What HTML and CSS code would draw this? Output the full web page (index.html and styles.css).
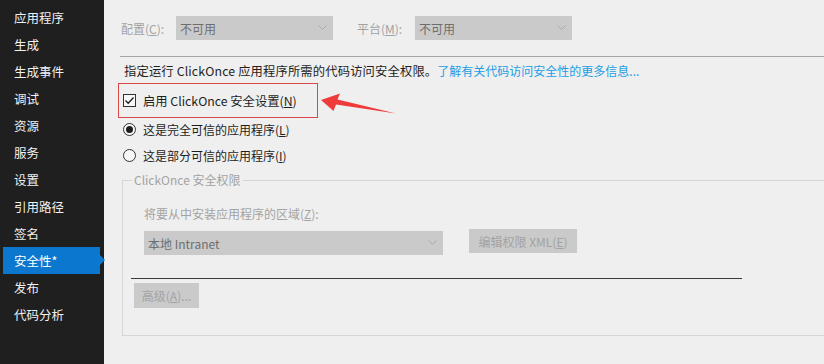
FILE: index.html
```html
<!DOCTYPE html>
<html lang="zh-CN">
<head>
<meta charset="utf-8">
<link rel="stylesheet" href="styles.css">
</head>
<body>
<div class="app">
  <nav class="sidebar">
    <div class="nav-item">应用程序</div>
    <div class="nav-item">生成</div>
    <div class="nav-item">生成事件</div>
    <div class="nav-item">调试</div>
    <div class="nav-item">资源</div>
    <div class="nav-item">服务</div>
    <div class="nav-item">设置</div>
    <div class="nav-item">引用路径</div>
    <div class="nav-item">签名</div>
    <div class="nav-item active">安全性*</div>
    <div class="nav-item">发布</div>
    <div class="nav-item">代码分析</div>
  </nav>
  <main class="main">
    <div class="toolbar">
      <span class="tb-label">配置(<u>C</u>):</span>
      <div class="combo combo-top"><span>不可用</span><svg class="chev" width="9" height="6" viewBox="0 0 9 6"><path d="M0.5 0.5 L4.5 4.5 L8.5 0.5" fill="none" stroke="#a9a9a9" stroke-width="1"/></svg></div>
      <span class="tb-label tb-label2">平台(<u>M</u>):</span>
      <div class="combo combo-top"><span>不可用</span><svg class="chev" width="9" height="6" viewBox="0 0 9 6"><path d="M0.5 0.5 L4.5 4.5 L8.5 0.5" fill="none" stroke="#a9a9a9" stroke-width="1"/></svg></div>
    </div>
    <div class="sep"></div>
    <p class="desc"><span class="desc-main">指定运行 ClickOnce 应用程序所需的代码访问安全权限。</span><a class="link">了解有关代码访问安全性的更多信息...</a></p>
    <div class="redbox">
      <span class="checkbox"><svg width="11" height="11" viewBox="0 0 11 11"><path d="M1.5 5.5 L4.2 8.2 L9.5 2.5" fill="none" stroke="#1e1e1e" stroke-width="1.3"/></svg></span>
      <span class="cb-label">启用 ClickOnce 安全设置(<u>N</u>)</span>
    </div>
    <div class="radio-row first"><span class="radio checked"></span><span>这是完全可信的应用程序(<u>L</u>)</span></div>
    <div class="radio-row"><span class="radio"></span><span>这是部分可信的应用程序(<u>I</u>)</span></div>
    <fieldset class="group">
      <legend>ClickOnce 安全权限</legend>
      <div class="zone-label">将要从中安装应用程序的区域(<u>Z</u>):</div>
      <div class="zone-row">
        <div class="combo combo-zone"><span>本地 Intranet</span><svg class="chev" width="9" height="6" viewBox="0 0 9 6"><path d="M0.5 0.5 L4.5 4.5 L8.5 0.5" fill="none" stroke="#a9a9a9" stroke-width="1"/></svg></div>
        <div class="btn btn-xml">编辑权限 XML(<u>E</u>)</div>
      </div>
      <div class="dark-line"></div>
      <div class="btn btn-adv">高级(<u>A</u>)...</div>
    </fieldset>
    <svg class="annot" width="90" height="30" viewBox="316 90 90 30">
      <polygon points="321,100 340,93.5 337.5,99.5 396,113.5 336,104.5 333.5,111" fill="#f03b3b"/>
    </svg>
  </main>
</div>
</body>
</html>
```
FILE: styles.css
```css
* { box-sizing: border-box; }
html, body { margin: 0; padding: 0; }
body {
  width: 824px;
  height: 364px;
  overflow: hidden;
  background: #efefef;
  font-family: "Noto Sans CJK SC", "Noto Sans", sans-serif;
  font-size: 12px;
  color: #1e1e1e;
}
u { text-decoration: underline; text-underline-offset: 1px; }
.app { display: flex; height: 364px; }
.sidebar {
  width: 104px;
  flex: none;
  background: #1f1f1f;
  padding-top: 4px;
  display: flex;
  flex-direction: column;
}
.nav-item {
  height: 27px;
  line-height: 27px;
  padding-left: 14px;
  color: #f1f1f1;
  font-size: 12.5px;
  position: relative;
}
.nav-item.active {
  background: #0b77cf;
  margin-left: 3px;
  padding-left: 11px;
  width: 97px;
  color: #ffffff;
}
.nav-item.active::after {
  content: "";
  position: absolute;
  right: -5px;
  top: 8px;
  border-top: 5.5px solid transparent;
  border-bottom: 5.5px solid transparent;
  border-left: 5px solid #0b77cf;
}
.main {
  flex: 1;
  position: relative;
  overflow: hidden;
  display: flex;
  flex-direction: column;
  align-items: flex-start;
}
.toolbar {
  display: flex;
  align-items: center;
  height: 24px;
  margin-top: 16px;
  padding-left: 17px;
}
.tb-label { color: #a3a3a3; width: 55px; }
.tb-label2 { margin-left: 24px; width: 58px; }
.combo {
  height: 24px;
  background: #cacaca;
  color: #6e6e6e;
  display: flex;
  align-items: center;
  justify-content: space-between;
  padding: 0 6px 0 4px;
}
.combo-top { width: 157px; }
.chev { flex: none; }
.sep {
  align-self: stretch;
  margin-top: 16px;
  margin-left: 16px;
  height: 1px;
  background: #a5a5a5;
}
.desc {
  margin: 5px 0 0 20px;
  line-height: 18px;
  white-space: nowrap;
}
.desc-main { font-size: 12.3px; letter-spacing: 0.15px; }
.link { color: #1a9ee6; }
.redbox {
  margin: 3px 0 0 14px;
  width: 200px;
  height: 35px;
  border: 1px solid #d9474b;
  display: flex;
  align-items: center;
  padding-left: 4px;
  gap: 7px;
}
.cb-label { font-size: 12.3px; }
.checkbox {
  width: 13px;
  height: 13px;
  border: 1px solid #333;
  background: #f7f7f7;
  display: flex;
  align-items: center;
  justify-content: center;
}
.radio-row {
  display: flex;
  align-items: center;
  gap: 7px;
  height: 22px;
  margin-left: 19px;
  margin-top: 4px;
}
.radio-row.first { margin-top: 0; }
.radio {
  width: 13px;
  height: 13px;
  border: 1px solid #333;
  border-radius: 50%;
  background: #f7f7f7;
  display: flex;
  align-items: center;
  justify-content: center;
}
.radio.checked::after {
  content: "";
  width: 7px;
  height: 7px;
  border-radius: 50%;
  background: #1e1e1e;
}
.group {
  margin: 6px 0 0 18px;
  width: 760px;
  border: 1px solid #d6d6d6;
  padding: 0 0 27px 21px;
  min-width: 0;
}
.group legend {
  color: #a3a3a3;
  line-height: 16px;
  padding: 0 2px;
  margin-left: -12px;
}
.zone-label {
  color: #a3a3a3;
  line-height: 18px;
  margin-top: 17px;
}
.zone-row {
  display: flex;
  align-items: flex-start;
  margin-top: 8px;
}
.combo-zone { width: 299px; }
.btn {
  height: 24px;
  background: #cacaca;
  color: #a3a3a3;
  display: flex;
  align-items: center;
  justify-content: center;
}
.btn-xml {
  width: 108px;
  margin-left: 26px;
  margin-top: -2px;
}
.dark-line {
  margin-top: 23px;
  margin-left: -13px;
  width: 611px;
  height: 1px;
  background: #3a3a3a;
}
.btn-adv {
  margin-top: 4px;
  margin-left: -10px;
  width: 65px;
  height: 25px;
}
.annot {
  position: absolute;
  left: 212px;
  top: 90px;
}
```
